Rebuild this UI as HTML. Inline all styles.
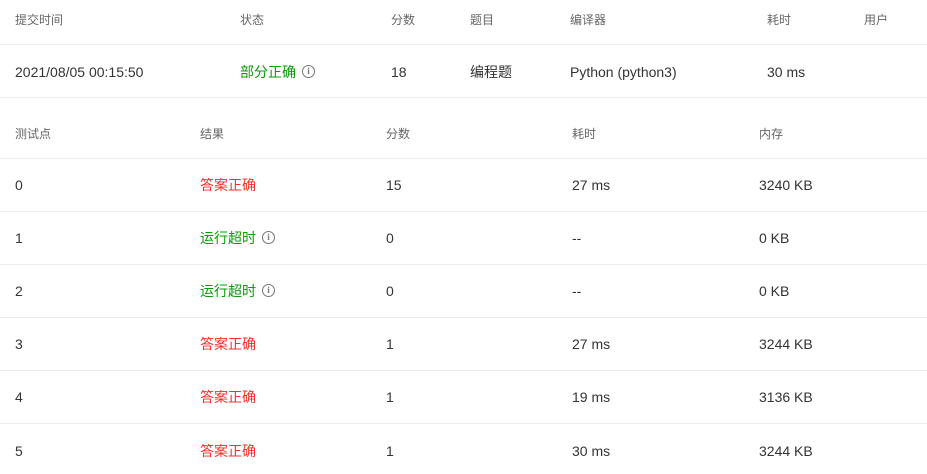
<!DOCTYPE html>
<html><head><meta charset="utf-8"><style>
body{margin:0;width:927px;height:474px;background:#fff;position:relative;overflow:hidden;font-family:"Liberation Sans","Noto Sans CJK SC",sans-serif;font-size:14px;color:#333}
.t{position:absolute;line-height:16px;white-space:nowrap}
.h{color:#666;font-size:12px}
.l{position:absolute;left:0;width:927px;height:1px;background:#ebebeb}
.g{color:#0a9a0a}.r{color:#f5302a}
.i{display:inline-block;box-sizing:border-box;width:13px;height:13px;border:1.3px solid #777;border-radius:50%;font-size:9px;line-height:11px;text-align:center;color:#777;font-weight:bold;vertical-align:top;margin-top:1px;margin-left:6px;font-family:"Liberation Serif",serif}
</style></head><body>
<div class="l" style="top:44px"></div><div class="l" style="top:97px"></div>
<div class="l" style="top:158px"></div><div class="l" style="top:211px"></div>
<div class="l" style="top:264px"></div><div class="l" style="top:317px"></div>
<div class="l" style="top:370px"></div><div class="l" style="top:423px"></div>

<span class="t h" style="left:15px;top:12px">提交时间</span>
<span class="t h" style="left:240px;top:12px">状态</span>
<span class="t h" style="left:391px;top:12px">分数</span>
<span class="t h" style="left:470px;top:12px">题目</span>
<span class="t h" style="left:570px;top:12px">编译器</span>
<span class="t h" style="left:767px;top:12px">耗时</span>
<span class="t h" style="left:864px;top:12px">用户</span>

<span class="t" style="left:15px;top:64px">2021/08/05 00:15:50</span>
<span class="t g" style="left:240px;top:64px">部分正确<span class="i">i</span></span>
<span class="t" style="left:391px;top:64px">18</span>
<span class="t" style="left:470px;top:64px">编程题</span>
<span class="t" style="left:570px;top:64px">Python (python3)</span>
<span class="t" style="left:767px;top:64px">30 ms</span>

<span class="t h" style="left:15px;top:126px">测试点</span>
<span class="t h" style="left:200px;top:126px">结果</span>
<span class="t h" style="left:386px;top:126px">分数</span>
<span class="t h" style="left:572px;top:126px">耗时</span>
<span class="t h" style="left:759px;top:126px">内存</span>

<span class="t" style="left:15px;top:177px">0</span><span class="t r" style="left:200px;top:177px">答案正确</span><span class="t" style="left:386px;top:177px">15</span><span class="t" style="left:572px;top:177px">27 ms</span><span class="t" style="left:759px;top:177px">3240 KB</span>
<span class="t" style="left:15px;top:230px">1</span><span class="t g" style="left:200px;top:230px">运行超时<span class="i">i</span></span><span class="t" style="left:386px;top:230px">0</span><span class="t" style="left:572px;top:230px">--</span><span class="t" style="left:759px;top:230px">0 KB</span>
<span class="t" style="left:15px;top:283px">2</span><span class="t g" style="left:200px;top:283px">运行超时<span class="i">i</span></span><span class="t" style="left:386px;top:283px">0</span><span class="t" style="left:572px;top:283px">--</span><span class="t" style="left:759px;top:283px">0 KB</span>
<span class="t" style="left:15px;top:336px">3</span><span class="t r" style="left:200px;top:336px">答案正确</span><span class="t" style="left:386px;top:336px">1</span><span class="t" style="left:572px;top:336px">27 ms</span><span class="t" style="left:759px;top:336px">3244 KB</span>
<span class="t" style="left:15px;top:389px">4</span><span class="t r" style="left:200px;top:389px">答案正确</span><span class="t" style="left:386px;top:389px">1</span><span class="t" style="left:572px;top:389px">19 ms</span><span class="t" style="left:759px;top:389px">3136 KB</span>
<span class="t" style="left:15px;top:443px">5</span><span class="t r" style="left:200px;top:443px">答案正确</span><span class="t" style="left:386px;top:443px">1</span><span class="t" style="left:572px;top:443px">30 ms</span><span class="t" style="left:759px;top:443px">3244 KB</span>
</body></html>
